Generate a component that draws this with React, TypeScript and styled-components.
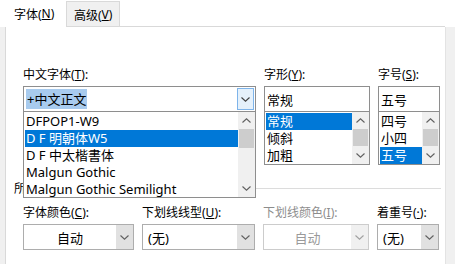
import React from "react";
import styled, { createGlobalStyle } from "styled-components";

const GlobalStyle = createGlobalStyle`
  html, body {
    margin: 0;
    padding: 0;
    background: #ffffff;
  }
  body {
    font-family: "Noto Sans", "Noto Sans CJK SC", sans-serif;
    font-size: 12px;
    color: #000;
  }
  * {
    box-sizing: border-box;
  }
`;

const Window = styled.div`
  width: 455px;
  height: 264px;
  overflow: hidden;
  background: #f0f0f0;
  display: flex;
  flex-direction: column;
`;

const TabStrip = styled.div`
  height: 27px;
  display: flex;
  background: #ffffff;
  padding-left: 5px;
  flex-shrink: 0;
`;

const Tab = styled.div<{ $active?: boolean }>`
  padding: ${(p) => (p.$active ? "0 0 0 9px" : "1px 0 0 7px")};
  width: ${(p) => (p.$active ? "61px" : "54px")};
  display: flex;
  align-items: center;
  background: ${(p) => (p.$active ? "#ffffff" : "#f0f0f0")};
  border: ${(p) => (p.$active ? "none" : "1px solid #d9d9d9")};
  margin-top: ${(p) => (p.$active ? "0" : "1px")};
  height: ${(p) => (p.$active ? "27px" : "26px")};
  font-size: 12px;
  white-space: nowrap;
`;

const TabFill = styled.div`
  flex: 1;
  border-bottom: 1px solid #d9d9d9;
  margin-right: 10px;
`;

const Key = styled.span`
  text-decoration: underline;
  text-underline-offset: 1px;
`;

const Panel = styled.div`
  flex: 1;
  margin-left: 5px;
  width: 441px;
  background: #ffffff;
  border-left: 1px solid #d9d9d9;
  border-right: 1px solid #e3e3e3;
  padding: 40px 0 0 17px;
  display: flex;
  flex-direction: column;
`;

const TopGrid = styled.div`
  display: grid;
  grid-template-columns: 233px 106px 62px;
  column-gap: 8px;
  align-items: start;
`;

const Field = styled.div`
  display: flex;
  flex-direction: column;
  position: relative;
`;

const Label = styled.div<{ $disabled?: boolean }>`
  height: 16px;
  line-height: 16px;
  margin-bottom: 3px;
  font-size: 12px;
  white-space: nowrap;
  color: ${(p) => (p.$disabled ? "#8d8d8d" : "#000")};
`;

const TextBox = styled.div`
  height: 26px;
  border: 1px solid #8e8e8e;
  background: #ffffff;
  display: flex;
  align-items: center;
  padding: 0 2px;
  font-size: 13px;
  position: relative;
`;

const SelText = styled.span`
  background: #a8cbee;
  padding: 1px 1px;
  line-height: 18px;
`;

const DropButton = styled.div`
  position: absolute;
  right: 1px;
  top: 1px;
  bottom: 1px;
  width: 17px;
  border: 1px solid #7eb4ea;
  background: #e5f1fb;
  display: flex;
  align-items: center;
  justify-content: center;
`;

const ListBox = styled.div<{ $rows: number }>`
  height: ${(p) => p.$rows * 17 + 2}px;
  border: 1px solid #8e8e8e;
  border-top: none;
  background: #ffffff;
  display: flex;
  font-size: 13px;
`;

const Popup = styled(ListBox)`
  position: absolute;
  top: 100%;
  left: 0;
  width: 233px;
  border-top: 1px solid #8e8e8e;
  margin-top: -1px;
  z-index: 2;
`;

const Items = styled.div`
  flex: 1;
  overflow: hidden;
  padding: 1px 0 0 1px;
`;

const Item = styled.div<{ $selected?: boolean }>`
  height: 17px;
  line-height: 17px;
  padding-left: 1px;
  white-space: nowrap;
  background: ${(p) => (p.$selected ? "#0078d7" : "transparent")};
  color: ${(p) => (p.$selected ? "#ffffff" : "#000")};
`;

const ScrollBar = styled.div`
  width: 17px;
  background: #f0f0f0;
  display: flex;
  flex-direction: column;
`;

const ScrollArrow = styled.div`
  height: 17px;
  display: flex;
  align-items: center;
  justify-content: center;
  flex-shrink: 0;
`;

const ScrollTrack = styled.div`
  flex: 1;
  padding: 0 1px;
`;

const Thumb = styled.div<{ $h: number }>`
  height: ${(p) => p.$h}px;
  background: #cdcdcd;
`;

const Group = styled.div`
  display: flex;
  align-items: center;
  height: 16px;
  margin: 15px 0 0 -9px;
  font-size: 12px;
  position: relative;
  z-index: 1;
`;

const GroupRule = styled.div`
  flex: 1;
  height: 1px;
  background: #dcdcdc;
  margin: 0 4px 0 6px;
`;

const BottomGrid = styled.div`
  display: grid;
  grid-template-columns: 111px 113px 106px 62px;
  column-gap: 8px;
  margin-top: 9px;
`;

const Combo = styled.div<{ $disabled?: boolean }>`
  height: 26px;
  border: 1px solid ${(p) => (p.$disabled ? "#cccccc" : "#adadad")};
  background: #ffffff;
  display: flex;
  font-size: 13px;
  color: ${(p) => (p.$disabled ? "#9a9a9a" : "#000")};
`;

const ComboText = styled.div<{ $center?: boolean }>`
  flex: 1;
  display: flex;
  align-items: center;
  justify-content: ${(p) => (p.$center ? "center" : "flex-start")};
  padding-left: ${(p) => (p.$center ? "0" : "5px")};
`;

const ComboButton = styled.div<{ $disabled?: boolean }>`
  width: 17px;
  background: ${(p) => (p.$disabled ? "#f0f0f0" : "#e1e1e1")};
  display: flex;
  align-items: center;
  justify-content: center;
`;

const Chevron = ({ up, color = "#606060" }: { up?: boolean; color?: string }) => (
  <svg width="9" height="5" viewBox="0 0 9 5">
    <path
      d={up ? "M0.5 4.5 L4.5 0.8 L8.5 4.5" : "M0.5 0.5 L4.5 4.2 L8.5 0.5"}
      fill="none"
      stroke={color}
      strokeWidth="1.1"
    />
  </svg>
);

const Scroll = ({ thumb }: { thumb: number }) => (
  <ScrollBar>
    <ScrollArrow>
      <Chevron up />
    </ScrollArrow>
    <ScrollTrack>
      <Thumb $h={thumb} />
    </ScrollTrack>
    <ScrollArrow>
      <Chevron />
    </ScrollArrow>
  </ScrollBar>
);

const fontNames = [
  "DFPOP1-W9",
  "D F 明朝体W5",
  "D F 中太楷書体",
  "Malgun Gothic",
  "Malgun Gothic Semilight",
];

export default function App() {
  return (
    <Window>
      <GlobalStyle />
      <TabStrip>
        <Tab $active>
          字体(<Key>N</Key>)
        </Tab>
        <Tab>
          高级(<Key>V</Key>)
        </Tab>
        <TabFill />
      </TabStrip>
      <Panel>
        <TopGrid>
          <Field>
            <Label>
              中文字体(<Key>T</Key>):
            </Label>
            <TextBox>
              <SelText>+中文正文</SelText>
              <DropButton>
                <Chevron color="#404040" />
              </DropButton>
            </TextBox>
            <Popup $rows={5}>
              <Items>
                {fontNames.map((name, i) => (
                  <Item key={name} $selected={i === 1}>
                    {name}
                  </Item>
                ))}
              </Items>
              <Scroll thumb={19} />
            </Popup>
          </Field>
          <Field>
            <Label>
              字形(<Key>Y</Key>):
            </Label>
            <TextBox>常规</TextBox>
            <ListBox $rows={3}>
              <Items>
                <Item $selected>常规</Item>
                <Item>倾斜</Item>
                <Item>加粗</Item>
              </Items>
              <Scroll thumb={17} />
            </ListBox>
          </Field>
          <Field>
            <Label>
              字号(<Key>S</Key>):
            </Label>
            <TextBox>五号</TextBox>
            <ListBox $rows={3}>
              <Items>
                <Item>四号</Item>
                <Item>小四</Item>
                <Item $selected>五号</Item>
              </Items>
              <Scroll thumb={17} />
            </ListBox>
          </Field>
        </TopGrid>
        <Group>
          所有文字
          <GroupRule />
        </Group>
        <BottomGrid>
          <Field>
            <Label>
              字体颜色(<Key>C</Key>):
            </Label>
            <Combo>
              <ComboText $center>自动</ComboText>
              <ComboButton>
                <Chevron />
              </ComboButton>
            </Combo>
          </Field>
          <Field>
            <Label>
              下划线线型(<Key>U</Key>):
            </Label>
            <Combo>
              <ComboText>(无)</ComboText>
              <ComboButton>
                <Chevron />
              </ComboButton>
            </Combo>
          </Field>
          <Field>
            <Label $disabled>
              下划线颜色(<Key>I</Key>):
            </Label>
            <Combo $disabled>
              <ComboText $center>自动</ComboText>
              <ComboButton $disabled>
                <Chevron color="#a0a0a0" />
              </ComboButton>
            </Combo>
          </Field>
          <Field>
            <Label>
              着重号(<Key>·</Key>):
            </Label>
            <Combo>
              <ComboText>(无)</ComboText>
              <ComboButton>
                <Chevron />
              </ComboButton>
            </Combo>
          </Field>
        </BottomGrid>
      </Panel>
    </Window>
  );
}
